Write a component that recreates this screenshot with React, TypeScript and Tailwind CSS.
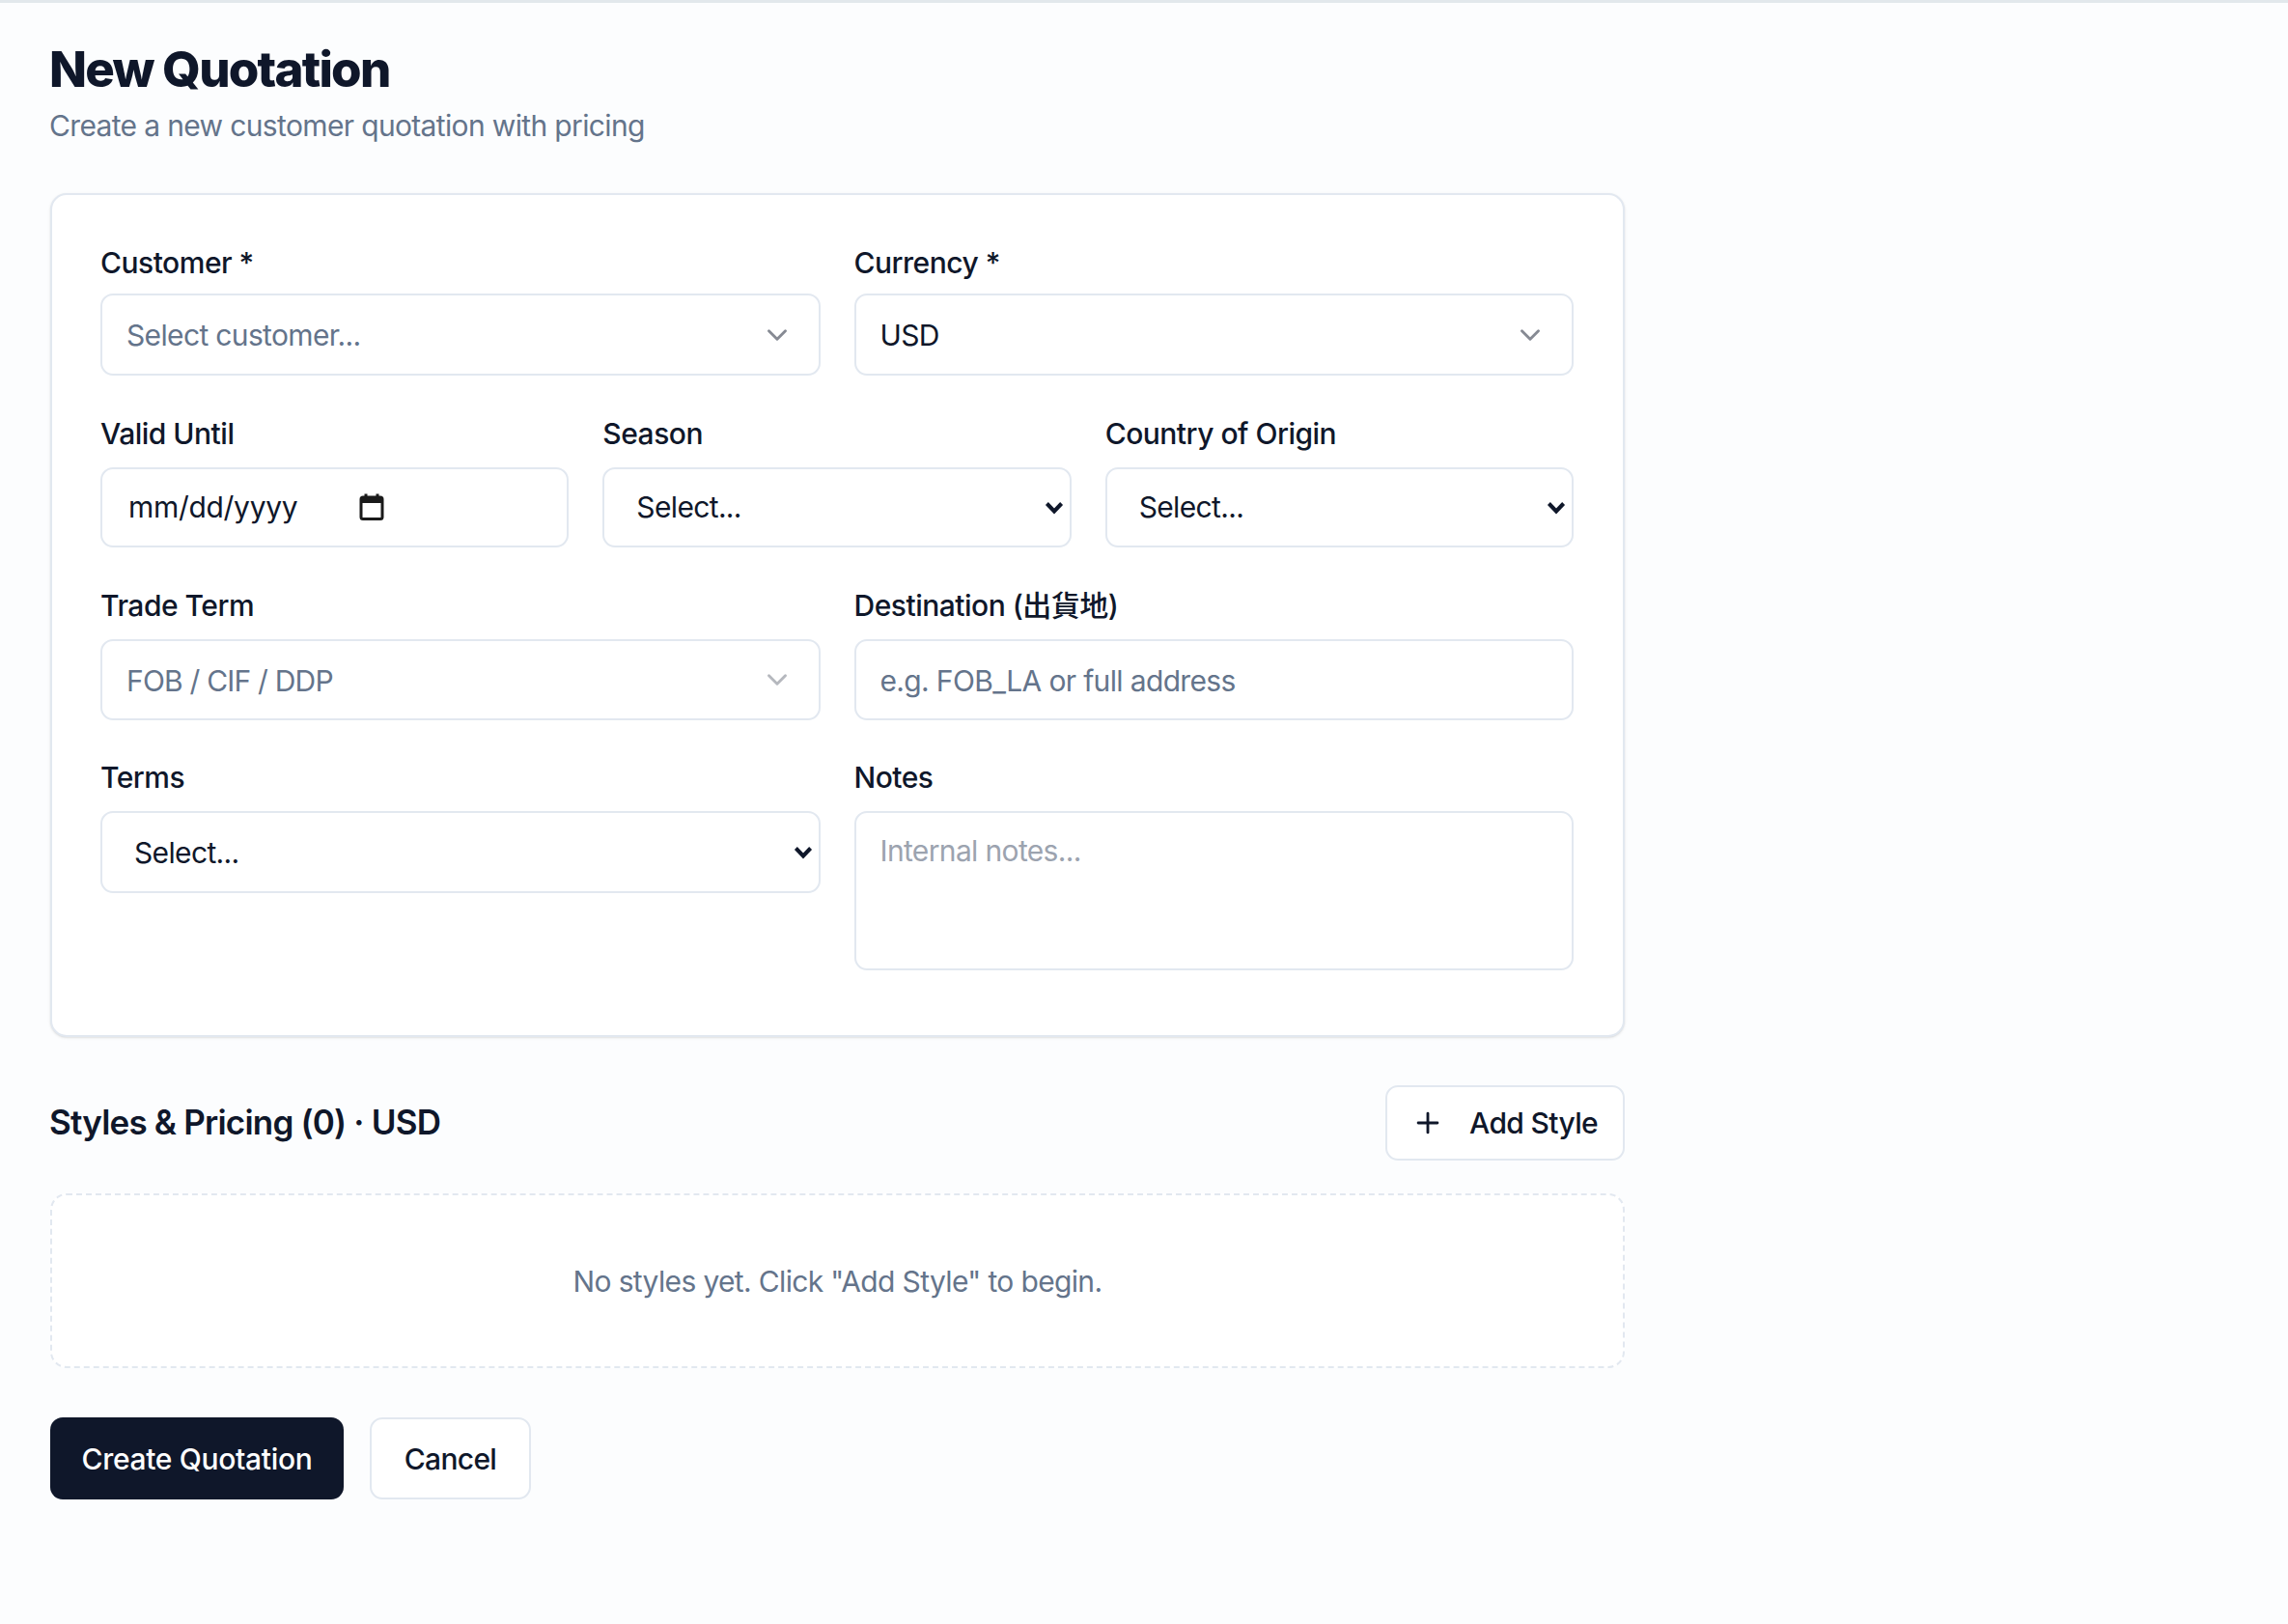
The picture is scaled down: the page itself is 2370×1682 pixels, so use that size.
import { ChevronDown, Plus } from "lucide-react";
import type { ReactNode } from "react";

function Field({ label, tight, children }: { label: string; tight?: boolean; children: ReactNode }) {
  return (
    <div className="flex flex-col min-w-0">
      <label
        className={`text-[30px] leading-[42px] font-medium tracking-[-0.5px] text-[#0f172a] ${tight ? "mb-[11px]" : "mb-[14px]"}`}
      >
        {label}
      </label>
      {children}
    </div>
  );
}

function Combo({ text, muted, faint }: { text: string; muted?: boolean; faint?: boolean }) {
  return (
    <button
      type="button"
      className={`flex items-center justify-between bg-white border-2 border-[#e2e8f0] rounded-[13px] pl-[25px] pr-[26px] text-[30px] w-full ${
        faint ? "h-[84px] tracking-[-0.8px]" : "h-[85px]"
      } ${muted ? "text-[#64748b]" : "text-[#0f172a]"}`}
    >
      <span className={faint ? "pt-[3px]" : "pt-[2px]"}>{text}</span>
      <ChevronDown className={`text-[#0f172a] ${faint ? "opacity-30" : "opacity-50"}`} size={34} strokeWidth={2} />
    </button>
  );
}

function NativeSelect({ tall }: { tall?: boolean }) {
  return (
    <div className="relative">
      <select
        className={`w-full appearance-none bg-white border-2 border-[#e2e8f0] rounded-[13px] pl-[33px] pr-[40px] text-[30px] text-[#0f172a] ${
          tall ? "h-[85px] pt-[2px]" : "h-[83px]"
        }`}
      >
        <option>Select...</option>
      </select>
      <svg
        className="absolute right-[8px] top-1/2 -translate-y-1/2 pointer-events-none"
        width="20"
        height="15"
        viewBox="0 0 20 15"
        fill="none"
      >
        <path d="M2.4 3 L10 11 L17.6 3" stroke="#0f172a" strokeWidth="4" />
      </svg>
    </div>
  );
}

export default function App() {
  return (
    <div className="min-h-[1682px] bg-[#fcfdfe] border-t-[3px] border-[#e2e8ec] font-['Inter','Noto_Sans_CJK_TC',sans-serif] text-[#0f172a] tracking-[-0.65px]">
      <div className="w-[1631px] ml-[52px] pt-[35px]">
        <h1 className="-ml-px text-[51px] leading-[68px] font-[760] tracking-[-0.035em] text-[#0f172a]">New Quotation</h1>
        <p className="-ml-px text-[30px] leading-[42px] mt-[3px] text-[#64748b]">Create a new customer quotation with pricing</p>

        <div className="mt-[49px] bg-white border-2 border-[#e2e8f0] rounded-[17px] pl-[50px] pr-[51px] pt-[49px] pb-[67px] shadow-sm">
          <div className="flex flex-col">
            <div className="grid grid-cols-2 gap-x-[35px]">
              <Field label="Customer *" tight>
                <Combo text="Select customer..." muted />
              </Field>
              <Field label="Currency *" tight>
                <Combo text="USD" />
              </Field>
            </div>

            <div className="grid grid-cols-3 gap-x-[35px] mt-[39px]">
              <Field label="Valid Until">
                <div className="flex items-center h-[83px] bg-white border-2 border-[#e2e8f0] rounded-[13px] pl-[27px] text-[30px] tracking-[-0.3px] text-[#0f172a]">
                  <span className="w-[239px]">mm/dd/yyyy</span>
                  <svg className="mb-[2px]" width="26" height="28" viewBox="0 0 26 28" fill="none">
                    <path d="M7 0.5v4M19 0.5v4" stroke="#1a1a1a" strokeWidth="3" />
                    <rect x="2" y="4" width="22" height="22.5" rx="2" stroke="#1a1a1a" strokeWidth="3" />
                    <rect x="2" y="4" width="22" height="6" fill="#1a1a1a" />
                  </svg>
                </div>
              </Field>
              <Field label="Season">
                <NativeSelect />
              </Field>
              <Field label="Country of Origin">
                <NativeSelect />
              </Field>
            </div>

            <div className="grid grid-cols-2 gap-x-[35px] mt-[39px]">
              <Field label="Trade Term">
                <Combo text="FOB / CIF / DDP" muted faint />
              </Field>
              <Field label="Destination (出貨地)">
                <input
                  placeholder="e.g. FOB_LA or full address"
                  className="h-[84px] bg-white border-2 border-[#e2e8f0] rounded-[13px] px-[25px] pt-[2px] text-[30px] placeholder:text-[#64748b]"
                />
              </Field>
            </div>

            <div className="grid grid-cols-2 gap-x-[35px] items-start mt-[38px]">
              <Field label="Terms">
                <NativeSelect tall />
              </Field>
              <Field label="Notes">
                <textarea
                  placeholder="Internal notes..."
                  className="h-[165px] resize-none bg-white border-2 border-[#e2e8f0] rounded-[13px] px-[25px] py-[18px] text-[30px] leading-[42px] placeholder:text-[#9ca3af]"
                />
              </Field>
            </div>
          </div>
        </div>

        <div className="flex items-center justify-between mt-[50px]">
          <h2 className="-ml-px pb-[2px] text-[35px] leading-[50px] font-semibold tracking-[-0.8px] text-[#0f172a]">
            Styles &amp; Pricing (0) · USD
          </h2>
          <button
            type="button"
            className="flex items-center h-[78px] w-[248px] bg-white border-2 border-[#e2e8f0] rounded-[13px] pl-[25px] gap-[26px] text-[30px] font-medium"
          >
            <Plus size={34} strokeWidth={2} />
            Add Style
          </button>
        </div>

        <div className="flex items-center justify-center h-[181px] mt-[34px] pt-[2px] bg-white border-2 border-dashed border-[#e2e8f0] rounded-[17px] text-[30px] text-[#64748b]">
          No styles yet. Click "Add Style" to begin.
        </div>

        <div className="flex gap-[27px] mt-[51px]">
          <button
            type="button"
            className="h-[85px] w-[304px] pt-[2px] bg-[#0f172a] text-white rounded-[13px] text-[30px] tracking-[-0.33px] font-medium"
          >
            Create Quotation
          </button>
          <button
            type="button"
            className="h-[85px] w-[167px] pt-[2px] bg-white border-2 border-[#e2e8f0] rounded-[13px] text-[30px] tracking-[-0.7px] font-medium"
          >
            Cancel
          </button>
        </div>
      </div>
    </div>
  );
}
